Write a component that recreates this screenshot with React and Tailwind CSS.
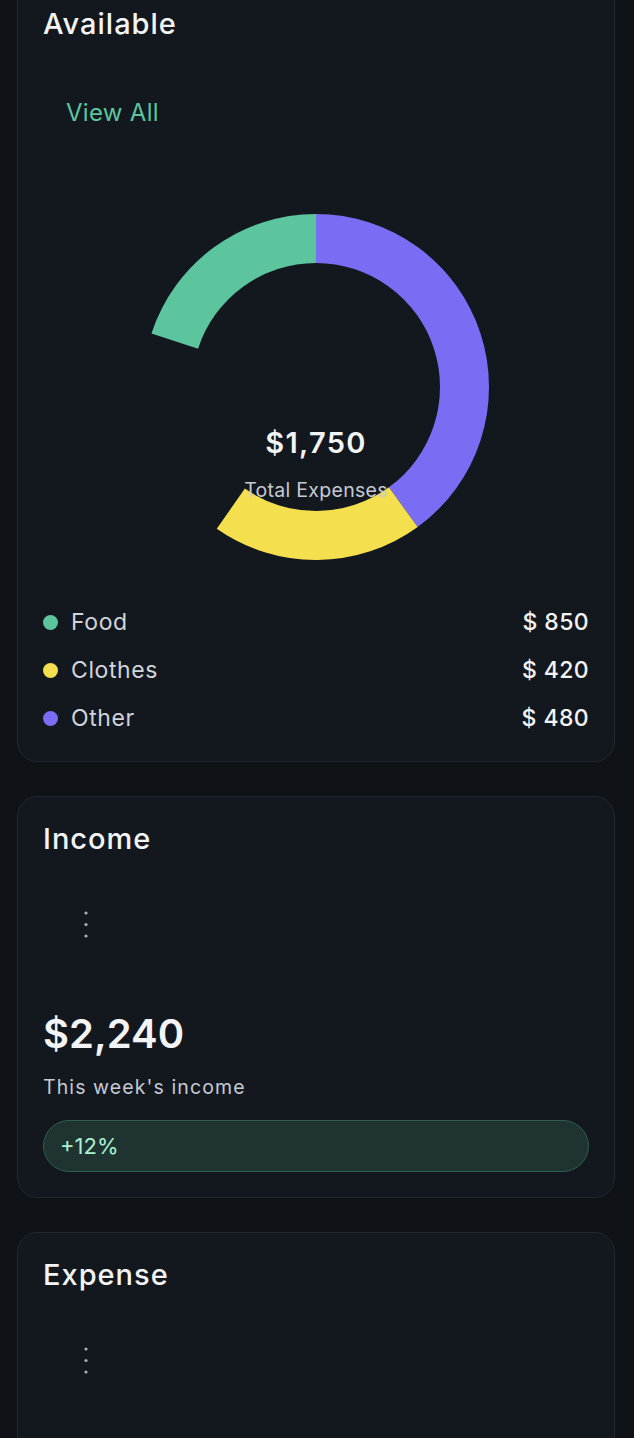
import React from "react";

const CX = 173, CY = 173, RO = 173, RI = 124;
function arcPath(a0, a1) {
  const d = Math.PI / 180;
  const p = (r, a) => [CX + r * Math.sin(a * d), CY - r * Math.cos(a * d)];
  const large = a1 - a0 > 180 ? 1 : 0;
  const [x0, y0] = p(RO, a0);
  const [x1, y1] = p(RO, a1);
  const [x2, y2] = p(RI, a1);
  const [x3, y3] = p(RI, a0);
  return `M${x0} ${y0} A${RO} ${RO} 0 ${large} 1 ${x1} ${y1} L${x2} ${y2} A${RI} ${RI} 0 ${large} 0 ${x3} ${y3} Z`;
}

function Dots() {
  return (
    <svg width="39" height="39" viewBox="0 0 39 39">
      <circle cx="20" cy="8" r="1.6" fill="#aab0ba" />
      <circle cx="20" cy="19.5" r="1.6" fill="#aab0ba" />
      <circle cx="20" cy="31" r="1.6" fill="#aab0ba" />
    </svg>
  );
}

const legend = [
  { label: "Food", value: "$ 850", color: "bg-[#5cc59e]" },
  { label: "Clothes", value: "$ 420", color: "bg-[#f4df4f]" },
  { label: "Other", value: "$ 480", color: "bg-[#7b6cf4]" },
];

export default function App() {
  return (
    <div
      className="min-h-screen bg-[#0f1317] pl-[17px] pr-[19px] overflow-hidden"
      style={{ fontFamily: "Inter, 'Noto Sans', sans-serif" }}
    >
      <div className="flex flex-col gap-[34px] -mt-[19px]">
        {/* Available card */}
        <div className="rounded-[20px] border border-[#23272e] bg-[#13171e] px-[25px] pt-[24px] pb-[27px]">
          <h2 className="text-[29px] leading-[36px] font-medium tracking-[1px] text-[#f3f4f6]">Available</h2>
          <div className="mt-[43px]">
            <button className="px-[23px] py-[10px] text-[24px] leading-[36px] tracking-[0.3px] text-[#5cc59e]">View All</button>
          </div>
          <div className="mt-[73px] flex justify-center">
            <div className="relative w-[346px] h-[346px]">
              <svg width="346" height="346" viewBox="0 0 346 346">
                <path d={arcPath(0, 144)} fill="#7b6cf4" />
                <path d={arcPath(144, 215)} fill="#f4df4f" />
                <path d={arcPath(288, 360)} fill="#5cc59e" />
              </svg>
              <div className="absolute left-0 right-0 top-[211px] flex flex-col items-center gap-[15px]">
                <div className="text-[29px] leading-[36px] font-semibold tracking-[1.3px] text-[#f3f4f6]">$1,750</div>
                <div className="text-[19.5px] leading-[28px] tracking-[0.3px] text-[#c6cad2]">Total Expenses</div>
              </div>
            </div>
          </div>
          <div className="mt-[46px] flex flex-col gap-[16px]">
            {legend.map((l) => (
              <div key={l.label} className="flex items-center justify-between h-[32px]">
                <div className="flex items-center gap-[13px]">
                  <span className={`w-[15px] h-[15px] rounded-full ${l.color}`} />
                  <span className="text-[23px] leading-[32px] tracking-[0.6px] text-[#d1d5db]">{l.label}</span>
                </div>
                <span className="text-[23px] leading-[32px] font-medium tracking-[0.4px] text-[#f3f4f6]">{l.value}</span>
              </div>
            ))}
          </div>
        </div>

        {/* Income card */}
        <div className="rounded-[20px] border border-[#23272e] bg-[#13171e] px-[25px] pt-[24px] pb-[25px]">
          <h2 className="text-[29px] leading-[36px] font-medium tracking-[1px] text-[#f3f4f6]">Income</h2>
          <div className="mt-[38px]">
            <button className="px-[23px] py-[10px] flex">
              <Dots />
            </button>
          </div>
          <div className="mt-[56px] text-[40px] leading-[48px] font-semibold text-[#f3f4f6]">$2,240</div>
          <div className="mt-[15px] text-[19.5px] leading-[28px] tracking-[1.1px] text-[#c6cad2]">This week's income</div>
          <div className="mt-[19px] h-[52px] rounded-full border border-[#2e5e51] bg-[#1f3430] flex items-center pl-[16px]">
            <span className="text-[22px] leading-[28px] text-[#a9f0d1]">+12%</span>
          </div>
        </div>

        {/* Expense card */}
        <div className="rounded-[20px] border border-[#23272e] bg-[#13171e] px-[25px] pt-[24px] pb-[25px] h-[260px]">
          <h2 className="text-[29px] leading-[36px] font-medium tracking-[1px] text-[#f3f4f6]">Expense</h2>
          <div className="mt-[38px]">
            <button className="px-[23px] py-[10px] flex">
              <Dots />
            </button>
          </div>
        </div>
      </div>
    </div>
  );
}
